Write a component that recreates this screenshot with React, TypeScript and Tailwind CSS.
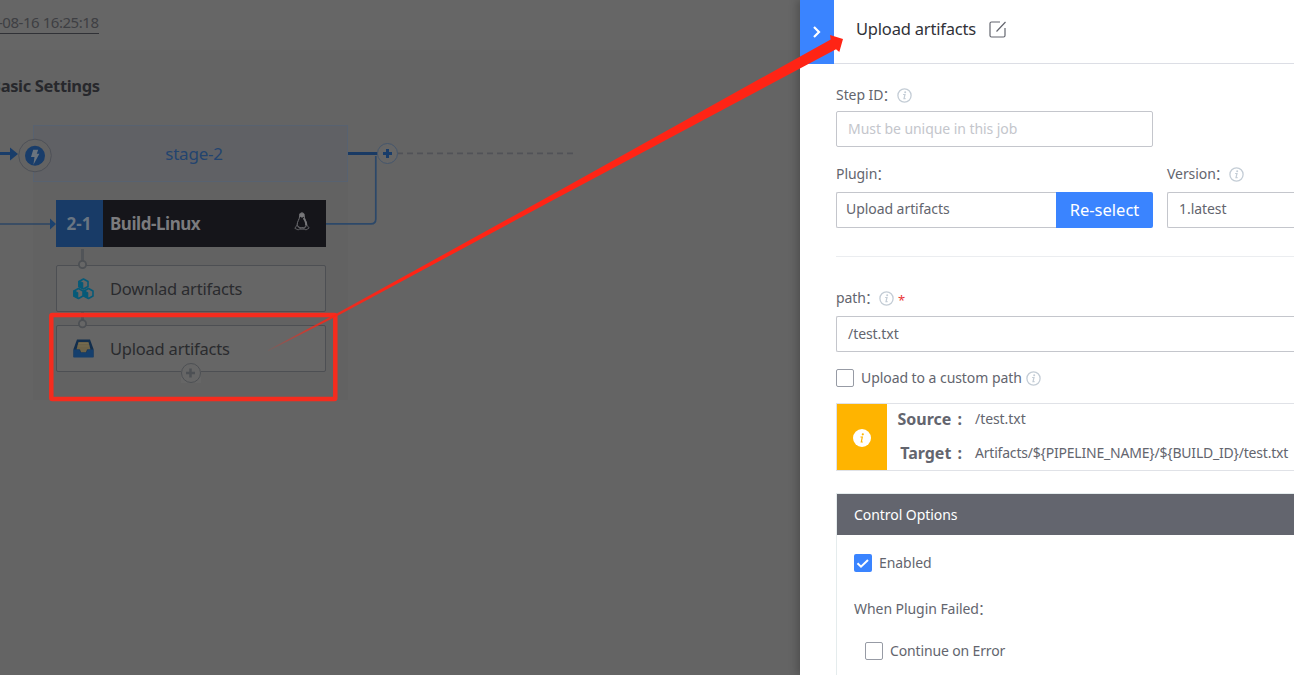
import type { ReactNode } from "react";

function InfoIcon({ className = "text-[#c4cdd6]" }: { className?: string }) {
  return (
    <svg className={`h-[15px] w-[15px] shrink-0 ${className}`} viewBox="0 0 15 15" fill="none">
      <circle cx="7.5" cy="7.5" r="6.6" stroke="currentColor" strokeWidth="1.3" />
      <circle cx="8.2" cy="4.2" r="1" fill="currentColor" />
      <path d="M6.1 6.5h1.9L7 10.7h1.6" stroke="currentColor" strokeWidth="1.2" />
    </svg>
  );
}

function Label({ children, className = "" }: { children: ReactNode; className?: string }) {
  return <span className={`whitespace-nowrap text-[14px] leading-5 tracking-[-0.06px] ${className}`}>{children}</span>;
}

function Colon() {
  return <span className="-ml-px">：</span>;
}

function Checkbox({ checked = false }: { checked?: boolean }) {
  return checked ? (
    <span className="flex h-[18px] w-[18px] shrink-0 items-center justify-center rounded-[2px] bg-[#3a84ff]">
      <svg width="14" height="14" viewBox="0 0 14 14" fill="none">
        <path d="M1.5 7.2 5 10.7 12 4" stroke="white" strokeWidth="2" />
      </svg>
    </span>
  ) : (
    <span className="h-[18px] w-[18px] shrink-0 rounded-[2px] border border-[#979ba5] bg-white" />
  );
}

function AtomCard({ icon, title }: { icon: ReactNode; title: string }) {
  return (
    <div className="flex h-[47px] w-[270px] items-center rounded-[2px] border border-[#4d4f53] bg-[#666666] pl-4">
      {icon}
      <span className="ml-4 mt-[2px] whitespace-nowrap text-[16.5px] tracking-[-0.22px] text-[#2a2b2e]">{title}</span>
    </div>
  );
}

function CubesIcon() {
  return (
    <svg width="21" height="22" viewBox="0 0 21 22" fill="none" stroke="#075a78" strokeWidth="1.6" strokeLinejoin="round">
      <path d="M10.5 1 15 3.5v5L10.5 11 6 8.500v-5z" />
      <path d="M5.500 10.500 10 13v5l-4.500 2.500L1 18v-5zM15.500 10.500 20 13v5l-4.500 2.500L11 18v-5z" />
      <path d="M6 3.500 9.500 5v5L6 8.500zM1 13l3.500 2v4.500L1 18zM11 13l3.500 2v4.500L11 18z" fill="#075a78" />
    </svg>
  );
}

function TrayIcon() {
  return (
    <svg width="21" height="19" viewBox="0 0 21 19">
      <path d="M4 .5h13l3.500 9.500v8H.500v-8z" fill="#122e4d" />
      <path d="M5.500 3h10l2 7.500h-3.500L13 13.500H8l-1-3H3.500z" fill="#6c6248" />
      <path d="M5.500 4.500h10M4.700 7h11.600" stroke="#756b4f" strokeWidth="1" />
      <path d="M.500 10.500h5.700l1.500 3h5.600l1.500-3h5.700v8H.500z" fill="#153f6d" />
    </svg>
  );
}

function PenguinIcon() {
  return (
    <svg width="16" height="19" viewBox="0 0 16 19" fill="none">
      <path d="M8 .8C5.900.8 5.300 2.300 5.500 5c.1 2-2.500 4.600-2.400 8.200.5 3.400 9 3.400 9.700 0 .2-3-2.300-6.100-2.400-8C10.400 2.400 10.100.8 8 .8z" stroke="#707074" strokeWidth="1" />
      <path d="M10.300 5c.2 2 3 4.500 2.800 8l-2 .8c.4-2.600-.7-5-2.200-7zM5.700 1.800C7 .7 9 .7 10.100 1.900L10.200 4.500 8 5.700 5.700 4.500z" fill="#77777a" />
      <path d="m3.200 13-2.400 3.300 3.300 1.600 2.100-1.100zM12.700 13l2.500 3-3.200 1.900-2.200-1z" stroke="#5d5d61" strokeWidth="1" />
      <path d="M6 17h4" stroke="#77777a" />
    </svg>
  );
}

function PipelineCanvas() {
  return (
    <div className="relative h-[675px] w-[800px] shrink-0 overflow-hidden bg-[#646464]">
      <header className="h-[50px] bg-[#666666] pt-[10px]">
        <span className="-ml-[2px] inline-block h-[23px] whitespace-nowrap border-b border-[#303136] text-[15px] leading-[23px] tracking-[-0.46px] text-[#3e3f43]">-08-16 16:25:18</span>
      </header>
      <h2 className="-ml-[10px] mt-[25px] whitespace-nowrap text-[16.5px] font-bold leading-[22px] tracking-[-0.34px] text-[#27282c]">Basic Settings</h2>

      <section className="absolute left-[33px] top-[125px] h-[275px] w-[315px] bg-[#626262]">
        <div className="flex h-[57px] items-center justify-center border border-[#586270] bg-[#606165] pl-[7px] text-[17px] tracking-[-0.22px] text-[#23446f]">stage-2</div>
        <div className="ml-[23px] mt-[18px] flex h-[47px] w-[270px] items-center bg-[#15151a] text-[#7b7b7e]">
          <span className="flex h-full w-[47px] items-center justify-center bg-[#183b67] pr-px text-[17px] font-bold text-[#697582]">2-1</span>
          <span className="ml-[7px] flex-1 whitespace-nowrap text-[17px] font-bold tracking-[-0.45px]">Build-Linux</span>
          <span className="-mt-[4px] mr-4"><PenguinIcon /></span>
        </div>
        <div className="ml-[23px] mt-[18px] flex flex-col gap-[13px]">
          <AtomCard icon={<CubesIcon />} title="Downlad artifacts" />
          <AtomCard icon={<TrayIcon />} title="Upload artifacts" />
        </div>
      </section>

      <svg className="absolute inset-0" width="800" height="675" viewBox="0 0 800 675" fill="none">
        <path d="M0 153.500h12" stroke="#193d6a" strokeWidth="3" />
        <path d="M10 147.500 18 154l-8 6.500z" fill="#193d6a" />
        <path d="M0 224h52" stroke="#2d4665" strokeWidth="1.500" />
        <path d="m50 218.500 6 5.500-6 5.500z" fill="#1b426f" />
        <circle cx="35" cy="155.500" r="16.300" fill="#636363" stroke="#4e5158" />
        <circle cx="35" cy="155.700" r="10" fill="#193d6a" />
        <path d="M33.200 149.800h5l-1.400 4h2.600l-6 11 1.100-7.800h-3.500z" fill="#6b747e" />
        <path d="M348 153.500h30" stroke="#193a64" strokeWidth="3" />
        <path d="M326 223.900h45q4.800 0 4.800-4.900v-63" stroke="#2c4869" strokeWidth="1.700" />
        <path d="M397 153.300h177" stroke="#515257" strokeWidth="1.700" strokeDasharray="6 4" />
        <circle cx="387.500" cy="153.500" r="10" fill="#666" stroke="#45566c" />
        <path d="M387.500 149v9M383 153.500h9" stroke="#193d6a" strokeWidth="3" />
        <path d="M82.500 249v12M82.500 312v8" stroke="#515458" strokeWidth="3" />
        <circle cx="82.500" cy="264.500" r="3.600" fill="#666" stroke="#4d5054" strokeWidth="1.800" />
        <circle cx="82.500" cy="323.700" r="3.600" fill="#666" stroke="#4d5054" strokeWidth="1.800" />
        <path d="M181 363h20v20h-20z" fill="#666" />
        <circle cx="191" cy="373" r="9.500" fill="#666" stroke="#4d5054" />
        <path d="M190.500 368.500v9M186 373h9" stroke="#4d5054" strokeWidth="2.500" />
      </svg>
    </div>
  );
}

function StepPanel() {
  return (
    <aside className="z-10 h-[675px] w-[494px] shrink-0 overflow-hidden bg-white text-[#63656e] shadow-[-3px_0_8px_rgba(0,0,0,0.22)]">
      <header className="flex h-16 border-b border-[#dcdee5]">
        <div className="flex h-16 w-[34px] shrink-0 items-center justify-center bg-[#3a84ff]">
          <svg width="10" height="14" viewBox="0 0 10 14" fill="none"><path d="m2 2 5 5-5 5" stroke="white" strokeWidth="2.200" /></svg>
        </div>
        <div className="flex h-[58px] items-center pl-[22px]">
          <h1 className="w-[120px] whitespace-nowrap text-[16.500px] tracking-[-0.2px] text-[#313238]">Upload artifacts</h1>
          <svg className="ml-[13px]" width="18" height="17" viewBox="0 0 18 17" fill="none" stroke="#63656e" strokeWidth="1.200">
            <path d="M11 1H2.500Q1 1 1 2.500v12Q1 16 2.500 16h12q1.500 0 1.500-1.500V7M7.500 10.500 16.500 1" />
          </svg>
        </div>
      </header>

      <div className="pl-9 pt-[21px]">
        <div className="flex h-5 items-center">
          <Label className="w-[61px]">Step ID<Colon /></Label>
          <span className="pt-px"><InfoIcon /></span>
        </div>
        <div className="mt-[6px] flex h-9 w-[317px] items-center rounded-[2px] border border-[#c4c6cc] pl-[11px]">
          <Label className="text-[#c4c6cc]">Must be unique in this job</Label>
        </div>

        <div className="mt-[17px] flex gap-[14px]">
          <div className="w-[317px] shrink-0">
            <Label className="block">Plugin<Colon /></Label>
            <div className="mt-2 flex h-9">
              <div className="flex-1 rounded-l-[2px] border border-r-0 border-[#c4c6cc] pl-[9px] pt-[6px] leading-none"><Label>Upload artifacts</Label></div>
              <button className="w-[97px] rounded-r-[2px] bg-[#3a84ff] text-[16.5px] text-white">Re-select</button>
            </div>
          </div>
          <div className="flex-1">
            <div className="flex h-5 items-center"><Label className="w-[62px]">Version<Colon /></Label><InfoIcon /></div>
            <div className="mt-2 h-9 rounded-l-[2px] border border-r-0 border-[#c4c6cc] pl-[11px] pt-[6px] leading-none"><Label>1.latest</Label></div>
          </div>
        </div>

        <div className="mt-7 border-t border-[#ebedf0] pt-[31px]">
          <div className="flex h-5 items-center">
            <Label className="w-[43px]">path<Colon /></Label>
            <InfoIcon />
            <span className="ml-1 mt-1 text-[13px] leading-none text-[#ea3636]">*</span>
          </div>
          <div className="mt-2 flex h-9 items-center rounded-l-[2px] border border-r-0 border-[#c4c6cc] pl-[11px]"><Label>/test.txt</Label></div>
        </div>

        <div className="mt-4 flex h-5 items-center">
          <Checkbox />
          <Label className="ml-[7px] w-[165px]">Upload to a custom path</Label>
          <InfoIcon />
        </div>

        <div className="mt-[15px] flex h-[68px] border border-r-0 border-[#e0e2e7]">
          <div className="flex w-[50px] shrink-0 items-center justify-center bg-[#ffb400] pt-[2px]">
            <svg width="18" height="18" viewBox="0 0 18 18" fill="none">
              <circle cx="9" cy="9" r="9" fill="white" />
              <circle cx="9.800" cy="5.300" r="1.100" fill="#ffb400" />
              <path d="M7.500 8h1.800l-1 5h1.500" stroke="#ffb400" strokeWidth="1.200" />
            </svg>
          </div>
          <div className="grid grid-cols-[75px_1fr] grid-rows-[30px_38px] items-center gap-x-[13px]">
            <span className="whitespace-nowrap text-right text-[16px] font-bold [word-spacing:2px]">Source :</span>
            <Label>/test.txt</Label>
            <span className="whitespace-nowrap text-right text-[16px] font-bold [word-spacing:2px]">Target :</span>
            <span className="whitespace-nowrap text-[14px] leading-5 tracking-[-0.2px]">{"Artifacts/${PIPELINE_NAME}/${BUILD_ID}/test.txt"}</span>
          </div>
        </div>

        <section className="mt-[22px] h-[182px] border-l border-t border-[#e5eced]">
          <h2 className="flex h-[41px] items-center bg-[#63656e] pl-[17px] text-[14px] tracking-[-0.06px] text-white">Control Options</h2>
          <div className="pl-[17px] pt-[18px]">
            <div className="flex h-5 items-center gap-[7px]"><Checkbox checked /><Label className="tracking-[-0.2px]">Enabled</Label></div>
            <Label className="mt-[26px] block">When Plugin Failed<Colon /></Label>
            <div className="ml-[11px] mt-[22px] flex h-5 items-center gap-[7px]"><Checkbox /><Label className="tracking-[-0.14px]">Continue on Error</Label></div>
          </div>
        </section>
      </div>
    </aside>
  );
}

function Annotation() {
  return (
    <svg className="pointer-events-none absolute inset-0 z-20" width="1294" height="675" viewBox="0 0 1294 675" fill="none">
      <defs>
        <linearGradient id="tail" gradientUnits="userSpaceOnUse" x1="264" y1="353" x2="400" y2="280">
          <stop offset="0" stopColor="#ff2415" stopOpacity="0" />
          <stop offset=".4" stopColor="#ff2415" stopOpacity=".8" />
          <stop offset="1" stopColor="#ff2415" />
        </linearGradient>
      </defs>
      <rect x="51.300" y="315" width="284" height="84" rx="1" stroke="#f52c1e" strokeWidth="4.500" />
      <path d="M268 350 340 311.800 550 195.700 830.700 39.500 830 35 843 39 839.300 52 836 49.300 550 201.800 340 314.400 268 351.200z" fill="url(#tail)" />
    </svg>
  );
}

export default function App() {
  return (
    <main className="relative flex h-[675px] w-[1294px] overflow-hidden font-['Noto_Sans','Noto_Sans_CJK_SC',sans-serif]">
      <PipelineCanvas />
      <StepPanel />
      <Annotation />
    </main>
  );
}
